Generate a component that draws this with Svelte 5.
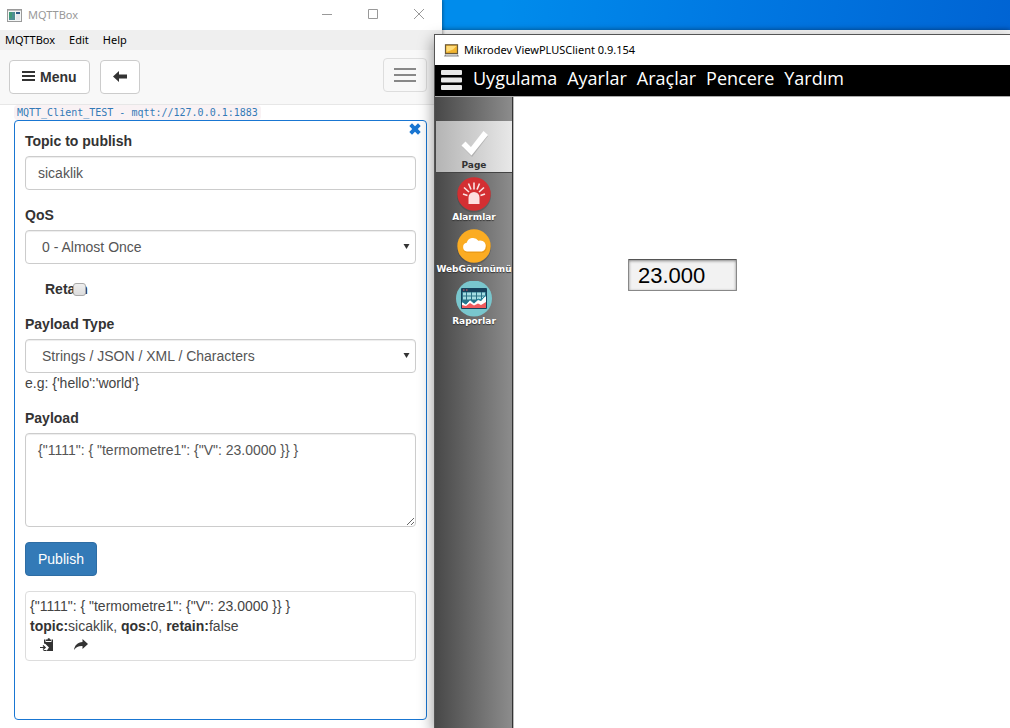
<script>
  let topic = $state('sicaklik');
  let qos = $state('0');
  let retain = $state(false);
  let payloadType = $state('text');
  let payload = $state('{"1111": { "termometre1": {"V": 23.0000 }} }');
  let reading = $state('23.000');

  const appMenu = ['MQTTBox', 'Edit', 'Help'];
  const viewMenu = ['Uygulama', 'Ayarlar', 'Araçlar', 'Pencere', 'Yardım'];
  const pages = [
    { id: 'page', label: 'Page' },
    { id: 'alarm', label: 'Alarmlar' },
    { id: 'web', label: 'WebGörünümü' },
    { id: 'report', label: 'Raporlar' }
  ];
  let current = $state('page');
</script>

{#snippet arrow()}
  <svg class="caret" width="7" height="7" viewBox="0 0 7 7"><path d="M0.5 1h6L3.5 6z" fill="#333" /></svg>
{/snippet}

<div class="desktop">
  <div class="behind"></div>

  <section class="win mqtt">
    <header class="titlebar">
      <svg width="15" height="13" viewBox="0 0 15 13">
        <rect x=".5" y=".5" width="14" height="12" fill="#f4f6f6" stroke="#9a9a9a" />
        <rect x="1" y="1" width="13" height="1" fill="#bdbdbd" />
        <rect x="2" y="3" width="6" height="8" fill="#4d8f92" />
        <rect x="2" y="3" width="3" height="6" fill="#3f9a78" />
        <rect x="9" y="3" width="4" height="5" fill="#2d5b86" />
        <rect x="9" y="5" width="4" height="6" fill="#e3e8ea" />
      </svg>
      <h1>MQTTBox</h1>
      <div class="winbuttons">
        <button aria-label="Minimize"><svg width="12" height="12" viewBox="0 0 12 12"><path d="M1 5.500h10" /></svg></button>
        <button aria-label="Maximize"><svg width="12" height="12" viewBox="0 0 12 12"><path d="M1.500 .5h9v9h-9z" /></svg></button>
        <button aria-label="Close"><svg width="12" height="12" viewBox="0 0 12 12"><path d="M1 0l10 10M11 0L1 10" /></svg></button>
      </div>
    </header>
    <nav class="appmenu">
      {#each appMenu as item}<button>{item}</button>{/each}
    </nav>
    <div class="toolbar">
      <button class="btn">
        <svg width="13" height="12" viewBox="0 0 13 12"><path d="M0 1h13M0 5h13M0 9h13" stroke="#333" stroke-width="2" /></svg>
        Menu
      </button>
      <button class="btn" aria-label="Back">
        <svg width="14" height="12" viewBox="0 0 14 12"><path d="M0 5.500L6 0v3.500h8v4H6V11z" fill="#333" /></svg>
      </button>
      <button class="toggle" aria-label="Toggle navigation"><i></i><i></i><i></i></button>
    </div>
    <main>
      <code>MQTT_Client_TEST - mqtt://127.0.0.1:1883</code>
      <form class="panel" onsubmit={(e) => e.preventDefault()}>
        <button type="button" class="remove" aria-label="Remove publisher">
          <svg width="12" height="12" viewBox="0 0 12 12"><path d="M3 .3L6 3.200 9 .3 11.700 3 8.800 6l2.900 3L9 11.700 6 8.800 3 11.700.3 9l2.900-3L.3 3z" fill="#1976d2" /></svg>
        </button>
        <div class="group">
          <label for="topic">Topic to publish</label>
          <input id="topic" class="control" bind:value={topic} />
        </div>
        <div class="group">
          <label for="qos">QoS</label>
          <div class="pick">
            <select id="qos" class="control" bind:value={qos}>
              <option value="0">0 - Almost Once</option>
              <option value="1">1 - Atleast Once</option>
              <option value="2">2 - Exactly Once</option>
            </select>
            {@render arrow()}
          </div>
        </div>
        <div class="check">
          <label for="retain">Retain</label>
          <input id="retain" type="checkbox" bind:checked={retain} />
        </div>
        <div class="group">
          <label for="ptype">Payload Type</label>
          <div class="pick">
            <select id="ptype" class="control" bind:value={payloadType}>
              <option value="text">Strings / JSON / XML / Characters</option>
              <option value="int">Integers</option>
            </select>
            {@render arrow()}
          </div>
          <p>e.g: {"{'hello':'world'}"}</p>
        </div>
        <div class="group">
          <label for="payload">Payload</label>
          <textarea id="payload" class="control" bind:value={payload}></textarea>
        </div>
        <button class="publish">Publish</button>
        <div class="message">
          <p>{'{"1111": { "termometre1": {"V": 23.0000 }} }'}</p>
          <p><b>topic:</b>sicaklik, <b>qos:</b>0, <b>retain:</b>false</p>
          <div class="actions">
            <button type="button" aria-label="Copy to editor">
              <svg width="14" height="14" viewBox="0 0 14 14">
                <path d="M4 1.500h1.500V4h6V1.500H13V13H6.500L9 9.500 5.500 6 4 5.500z" fill="#333" />
                <path d="M6 3V1.500h1.500L8 .3h1.500l.5 1.200h1V3z" fill="#333" />
                <path d="M0 9.500h4.500M3 7.500l2.200 2L3 11.500" fill="none" stroke="#333" stroke-width="1.200" />
                <path d="M3.500 12.500h3" fill="none" stroke="#333" />
              </svg>
            </button>
            <button type="button" aria-label="Publish again">
              <svg width="14" height="12" viewBox="0 0 14 12"><path d="M8.500 0L14 5 8.500 10V7C4.500 6.800 2 8 0 11 .5 6.500 3.500 3.300 8.500 3z" fill="#333" /></svg>
            </button>
          </div>
        </div>
      </form>
    </main>
  </section>

  <section class="win view">
    <header class="titlebar">
      <svg width="15" height="13" viewBox="0 0 15 13">
        <rect x="1.500" y=".8" width="12" height="8.700" fill="#f3b52f" stroke="#6b5a3a" stroke-width="1.200" />
        <path d="M2.500 2h10L9 5.500 2.500 8z" fill="#ffdc7a" />
        <path d="M1 10.500h13l1 2H0z" fill="#8a8a8a" /><path d="M2 11h11" stroke="#ddd" />
      </svg>
      <h1>Mikrodev ViewPLUSClient 0.9.154</h1>
    </header>
    <nav class="viewmenu">
      <button class="burger" aria-label="Menu">
        <svg width="21" height="20" viewBox="0 0 21 20"><g fill="#e8e8e8"><rect width="21" height="5" rx="1" /><rect y="7.500" width="21" height="5" rx="1" /><rect y="15" width="21" height="5" rx="1" /></g></svg>
      </button>
      {#each viewMenu as item}<button>{item}</button>{/each}
    </nav>
    <div class="work">
      <aside>
        {#each pages as p}
          <button class:active={current === p.id} onclick={() => (current = p.id)}>
            <svg width="36" height="36" viewBox="0 0 36 36">
              {#if p.id === 'page'}
                <path d="M6.500 22l4-4 5 4.500L28 7.500l4 3.500L16 32z" fill="#777" opacity=".35" />
                <path d="M5.500 20.500l4-4 5.500 5.500L27.500 6l4.500 4L15.500 30.500z" fill="#fff" />
              {:else if p.id === 'alarm'}
                <circle cx="18" cy="18.500" r="17" fill="#333" opacity=".3" />
                <circle cx="18" cy="17" r="16.700" fill="#d32f32" />
                <path d="M12.500 27V20.500a5.500 5.500 0 0 1 11 0V27z" fill="#fde0e0" />
                <path d="M18 5.500v7M12.500 6.500l2.500 6M23.500 6.500l-2.500 6M8 10.500l5 4.500M28 10.500L23 15M7 17l4.500 1.500M29 17l-4.500 1.500" stroke="#fbe4e4" stroke-width="1.600" />
              {:else if p.id === 'web'}
                <circle cx="18" cy="18.500" r="17" fill="#333" opacity=".3" />
                <circle cx="18" cy="17" r="16.700" fill="#fbac22" />
                <path d="M11.500 24a4.700 4.700 0 0 1-.6-9.300 7 7 0 0 1 12.500-1.700 5.500 5.500 0 0 1 3.600 11z" fill="#dd8b0e" opacity=".5" />
                <path d="M11 22.500a4.400 4.400 0 0 1-.3-8.700 6.500 6.500 0 0 1 11.700-2 5.500 5.500 0 0 1 3.600 10.700z" fill="#fff" />
              {:else}
                <circle cx="18" cy="17.500" r="18" fill="#79c6cd" />
                <rect x="5" y="7" width="26" height="21" rx="1" fill="#17415b" />
                <rect x="6" y="11" width="24" height="16" fill="#2b7287" />
                <path d="M7 11.500h3v3H7zM11 11.500h4v3h-4zM16 11.500h4v3h-4zM21 11.500h4v3h-4zM26 11.500h3v3h-3zM7 15.500h3v3H7zM11 15.500h4v3h-4zM16 15.500h4v3h-4zM21 15.500h4v3h-4zM26 15.500h3v3h-3z" fill="#a5dde2" />
                <path d="M6 21l4 2.500 4-4.500 4 3.500 4-3.500 3 1 5-5v12H6z" fill="#fff" />
                <path d="M6 27v-3l4 1 4-3 4 2.500 4-2 3 1.500 5-3v6z" fill="#f05b5e" />
                <path d="M6 20.500l4 2.500 4-4.500 4 3.500 4-4 3 1 5-5" fill="none" stroke="#23839a" />
                <path d="M7 9h1.500M10 9h1.500" stroke="#f05b5e" />
              {/if}
            </svg>
            <span>{p.label}</span>
          </button>
        {/each}
      </aside>
      <div class="canvas">
        <input class="reading" aria-label="termometre1" bind:value={reading} />
      </div>
    </div>
  </section>
</div>

<style>
  :global(body) { margin: 0; }
  * { box-sizing: border-box; }
  h1, p { margin: 0; font-weight: 400; }
  button { margin: 0; padding: 0; border: 0; background: none; color: inherit; font: inherit; }
  svg { display: block; flex: none; }

  .desktop {
    position: relative;
    height: 100vh;
    overflow: hidden;
    background: linear-gradient(100deg, #008cec 44%, #0078e2 65%, #005bcd 100%);
    font-family: "Liberation Sans", Arial, sans-serif;
    font-size: 14px;
    line-height: 20px;
    color: #333;
  }
  .behind { position: absolute; inset: 30px 0 0 0; background: #f4f4f4; box-shadow: 0 -1px 4px rgb(0 0 0 / .3); }
  .win { position: absolute; display: flex; flex-direction: column; background: #fff; }
  .mqtt { left: 0; top: 0; bottom: 0; width: 442px; box-shadow: 1px 0 3px rgb(0 0 0 / .35); }
  .view {
    left: 434px; top: 34px; right: 0; bottom: 0;
    border: solid #555;
    border-width: 1px 0 0 1px;
    box-shadow: -1px 5px 14px rgb(0 0 0 / .4);
  }

  .titlebar { display: flex; align-items: center; height: 30px; padding-left: 7px; gap: 6px; font-family: "Noto Sans", sans-serif; }
  .titlebar h1 { font-size: 11px; line-height: 20px; }
  .mqtt h1 { color: #999; }
  .view .titlebar { padding-left: 9px; gap: 5px; color: #000; }
  .winbuttons { display: flex; margin-left: auto; }
  .winbuttons button { width: 46px; height: 30px; display: grid; place-items: center; }
  .winbuttons path { fill: none; stroke: #999; }

  .appmenu { display: flex; gap: 14px; height: 20px; padding-left: 5px; background: #efefef; color: #000; font: 11px/20px "Noto Sans", sans-serif; }

  .toolbar { display: flex; align-items: center; gap: 10px; height: 55px; padding: 0 15px 0 9px; background: #f8f8f8; border-bottom: 1px solid #e7e7e7; }
  .btn { display: flex; align-items: center; gap: 5px; height: 34px; padding: 0 12px; border: 1px solid #ccc; border-radius: 4px; background: #fff; font-weight: 700; }
  .toggle { display: grid; align-content: center; justify-items: center; gap: 4px; width: 44px; height: 34px; margin: 0 0 4px auto; border: 1px solid #ddd; border-radius: 4px; }
  .toggle i { width: 22px; height: 2px; background: #888; }

  main { flex: 1; display: flex; flex-direction: column; align-items: flex-start; padding: 0 15px 8px 14px; }
  code { padding: 0 3px; background: #f9f2f4; border-radius: 4px; color: #337ab7; font: 10px/15px "DejaVu Sans Mono", monospace; }
  .panel { position: relative; flex: 1; align-self: stretch; padding: 10px; border: 1px solid #1976d2; border-radius: 4px; }
  .remove { position: absolute; top: 2px; right: 5px; }
  .group { margin-bottom: 15px; }
  label { display: block; margin-bottom: 5px; font-weight: 700; }
  .control { display: block; width: 100%; height: 34px; margin: 0; padding: 6px 12px; border: 1px solid #ccc; border-radius: 4px; background: #fff; box-shadow: inset 0 1px 1px rgb(0 0 0 / .075); color: #555; font: inherit; }
  textarea.control { height: 94px; }
  select.control { appearance: none; padding-left: 16px; }
  .pick { position: relative; }
  .caret { position: absolute; right: 6px; top: 13px; }
  .check { position: relative; width: fit-content; padding-left: 20px; margin-bottom: 15px; }
  .check label { margin: 0; }
  .check input { position: absolute; right: 2px; top: 4px; width: 13px; height: 13px; margin: 0; appearance: none; border: 1px solid #aaa; border-radius: 3px; background: linear-gradient(#eee, #ddd); }
  .check input:checked { background: #337ab7; }
  .publish { display: block; height: 34px; margin-bottom: 15px; padding: 0 12px; border: 1px solid #2e6da4; border-radius: 4px; background: #337ab7; color: #fff; }
  .message { height: 70px; padding: 4px; border: 1px solid #ddd; border-radius: 4px; }
  .group p, .message p { color: #444; }
  .message b { color: #333; }
  .actions { display: flex; gap: 20px; padding: 2px 10px; }

  .viewmenu { display: flex; align-items: center; gap: 10px; height: 31px; padding: 0 6px 5px; background: #000; color: #fff; font: 18px/26px "Open Sans", "Noto Sans", sans-serif; }
  .burger { padding: 4px 1px 0 0; }
  .work { flex: 1; display: flex; border-top: 1px solid #aaa; }
  aside { display: flex; flex-direction: column; width: 79px; padding: 24px 1px 0; background: linear-gradient(90deg, #484848, #8d8d8d); border-right: 1px solid #bbb; box-shadow: inset -1px 0 #333; }
  aside button { display: flex; flex-direction: column; align-items: center; height: 52px; padding-top: 4px; color: #fff; font: 700 9px/10px "DejaVu Sans", sans-serif; white-space: nowrap; }
  aside span { margin-top: -1px; text-shadow: 0 1px 1px #333; }
  aside .active { background: linear-gradient(90deg, #b4b4b4, #e8e8e8); border-bottom: 1px solid #444; color: #333; }
  aside .active span { text-shadow: none; }
  .canvas { flex: 1; padding: 162px 0 0 114px; }
  .reading { display: block; width: 109px; height: 32px; padding: 3px 9px 1px; border: 1px solid #888; border-top-color: #555; border-radius: 1px; background: #f2f2f2; box-shadow: inset 0 1px 3px rgb(0 0 0 / .45); color: #000; font: 22px/26px "Liberation Sans", Arial, sans-serif; }
</style>
